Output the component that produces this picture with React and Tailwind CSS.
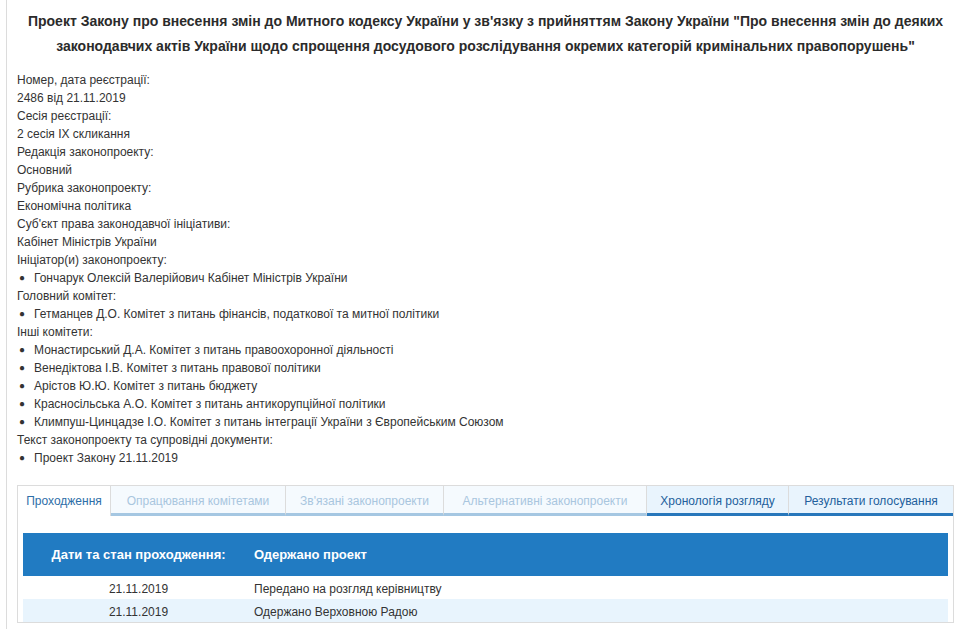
import React from 'react';

const info = [
  { label: 'Номер, дата реєстрації:', value: '2486 від 21.11.2019' },
  { label: 'Сесія реєстрації:', value: '2 сесія IX скликання' },
  { label: 'Редакція законопроекту:', value: 'Основний' },
  { label: 'Рубрика законопроекту:', value: 'Економічна політика' },
  { label: "Суб'єкт права законодавчої ініціативи:", value: 'Кабінет Міністрів України' },
  { label: 'Ініціатор(и) законопроекту:', list: ['Гончарук Олексій Валерійович Кабінет Міністрів України'] },
  { label: 'Головний комітет:', list: ['Гетманцев Д.О. Комітет з питань фінансів, податкової та митної політики'] },
  {
    label: 'Інші комітети:',
    list: [
      'Монастирський Д.А. Комітет з питань правоохоронної діяльності',
      'Венедіктова І.В. Комітет з питань правової політики',
      'Арістов Ю.Ю. Комітет з питань бюджету',
      'Красносільська А.О. Комітет з питань антикорупційної політики',
      'Климпуш-Цинцадзе І.О. Комітет з питань інтеграції України з Європейським Союзом',
    ],
  },
  { label: 'Текст законопроекту та супровідні документи:', list: ['Проект Закону 21.11.2019'] },
];

const tabs = [
  { name: 'Проходження', w: 'w-[93px]', state: 'active' },
  { name: 'Опрацювання комітетами', w: 'w-[175px]', state: 'disabled' },
  { name: "Зв'язані законопроекти", w: 'w-[158px]', state: 'disabled' },
  { name: 'Альтернативні законопроекти', w: 'w-[203px]', state: 'disabled' },
  { name: 'Хронологія розгляду', w: 'w-[142px]', state: 'on' },
  { name: 'Результати голосування', w: 'flex-1', state: 'on' },
];

const rows = [
  { date: '21.11.2019', text: 'Передано на розгляд керівництву' },
  { date: '21.11.2019', text: 'Одержано Верховною Радою' },
];

export default function App() {
  return (
    <div className="h-[629px] overflow-hidden bg-white pl-[6px] font-['Liberation_Sans',Arial,sans-serif] text-[#333]">
      <div className="h-full border-l border-[#dcdcdc] pl-[10px] pr-[8px]">
        <h1 className="pt-[9px] text-center text-[14px] font-bold leading-[25px] text-[#2b2b2b]">
          Проект Закону про внесення змін до Митного кодексу України у зв'язку з прийняттям Закону України "Про внесення змін до деяких
          <br />
          законодавчих актів України щодо спрощення досудового розслідування окремих категорій кримінальних правопорушень"
        </h1>

        <div className="mt-[12px] text-[12px] leading-[18px]">
          {info.map((item) => (
            <div key={item.label}>
              <div>{item.label}</div>
              {item.value && <div>{item.value}</div>}
              {item.list && (
                <ul>
                  {item.list.map((li) => (
                    <li key={li} className="flex">
                      <span className="w-[17px] pl-[2px] text-[10px]">●</span>
                      <span>{li}</span>
                    </li>
                  ))}
                </ul>
              )}
            </div>
          ))}
        </div>

        <div className="mt-[18px] border border-[#dcdcdc]">
          <div className="flex h-[30px] text-[12px]">
            {tabs.map((t) => (
              <div
                key={t.name}
                className={
                  t.w +
                  ' flex items-center justify-center border-r border-[#dcdcdc] last:border-r-0 ' +
                  (t.state === 'active'
                    ? 'bg-white text-[#2d6ea8]'
                    : t.state === 'disabled'
                    ? 'border-b-[3px] border-b-[#a5c7e2] bg-[#f5fafe] pt-[3px] text-[#a9c6de]'
                    : 'border-b-[3px] border-b-[#2777bb] bg-[#e9f4fd] pt-[3px] text-[#235f9c]')
                }
              >
                {t.name}
              </div>
            ))}
          </div>

          <div className="mx-[5px] mt-[17px]">
            <div className="flex h-[43px] items-center bg-[#217bc2] text-[13px] font-bold text-white">
              <div className="w-[231px] text-center">Дати та стан проходження:</div>
              <div>Одержано проект</div>
            </div>
            {rows.map((r, i) => (
              <div
                key={r.text}
                className={'flex h-[23px] items-center pt-[3px] text-[12px] ' + (i % 2 === 1 ? 'bg-[#e8f4fd]' : 'bg-white')}
              >
                <div className="w-[231px] text-center">{r.date}</div>
                <div>{r.text}</div>
              </div>
            ))}
          </div>
        </div>
      </div>
    </div>
  );
}
